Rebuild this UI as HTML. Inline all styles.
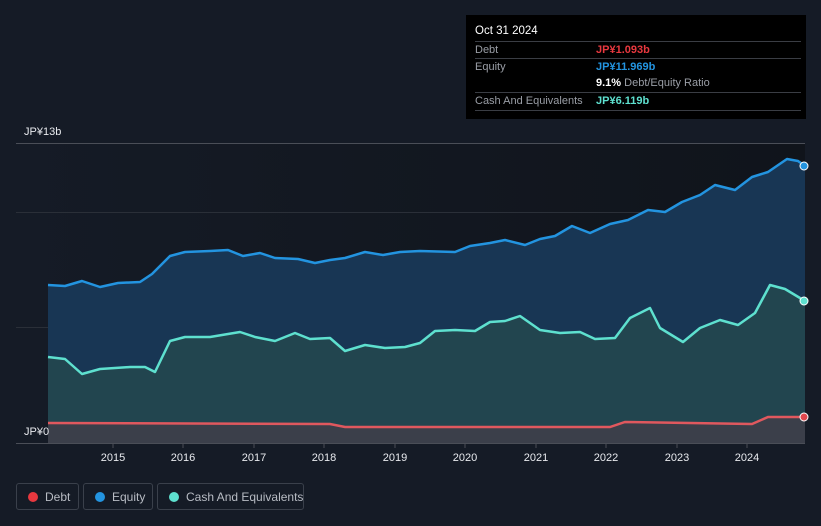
<!DOCTYPE html><html><head><style>
body{margin:0;width:821px;height:526px;background:#151b26;font-family:"Liberation Sans",sans-serif;overflow:hidden;position:relative}
.tt{position:absolute;left:466px;top:15px;width:340px;height:104px;background:#000;font-size:11px;color:#9a9ea6}
.tt .h{position:absolute;left:9px;top:10px;color:#fff;font-size:11.5px}
.r{position:absolute;left:9px;width:326px;border-top:1px solid #3a3d44;height:17px;line-height:17px}
.r span{position:absolute;left:121px;font-weight:bold}
.leg{position:absolute;top:483px;height:27px;border:1px solid #3a404b;border-radius:3px;color:#b8bcc4;font-size:12px;line-height:26px;box-sizing:border-box;white-space:nowrap}
.leg i{position:absolute;left:11px;top:8px;width:10px;height:10px;border-radius:50%}
.leg b{font-weight:normal;position:absolute;left:28px}
</style></head><body>
<svg width="821" height="526" style="position:absolute;left:0;top:0">
<defs><linearGradient id="bg" x1="0" x2="1"><stop offset="0" stop-color="#151b26"/><stop offset="1" stop-color="#10141b"/></linearGradient></defs>
<rect x="16" y="143" width="789" height="300" fill="url(#bg)"/>
<line x1="16" y1="143.5" x2="805" y2="143.5" stroke="#4a4e57"/>
<line x1="16" y1="212.5" x2="805" y2="212.5" stroke="#2a2f38"/>
<line x1="16" y1="327.5" x2="805" y2="327.5" stroke="#2a2f38"/>
<path d="M48 285L65 286 82 281 100 287 118 283 140 282 152 274 170 256 185 252 210 251 228 250 243 256 260 253 275 258 298 259 315 263 330 260 345 258 365 252 383 255 400 252 420 251 455 252 470 246 490 243 505 240 525 245 540 239 555 236 572 226 590 233 610 224 628 220 648 210 665 212 682 202 700 195 715 185 735 190 752 177 768 172 787 159 798 161 805 166L805 443 48 443Z" fill="#183654"/>
<path d="M48 357L65 359 82 374 100 369 130 367 145 367 155 372 170 341 185 337 210 337 240 332 255 337 275 341 295 333 310 339 330 338 345 351 365 345 385 348 405 347 420 343 435 331 455 330 475 331 490 322 505 321 520 316 540 330 560 333 580 332 595 339 615 338 630 318 650 308 660 328 683 342 700 328 720 320 738 325 755 313 770 285 785 289 805 301L805 443 48 443Z" fill="#22454f"/>
<path d="M48 423L330 424 345 427 610 427 625 422 752 424 768 417 805 417L805 443 48 443Z" fill="#3b3f4a"/>
<path d="M48 285L65 286 82 281 100 287 118 283 140 282 152 274 170 256 185 252 210 251 228 250 243 256 260 253 275 258 298 259 315 263 330 260 345 258 365 252 383 255 400 252 420 251 455 252 470 246 490 243 505 240 525 245 540 239 555 236 572 226 590 233 610 224 628 220 648 210 665 212 682 202 700 195 715 185 735 190 752 177 768 172 787 159 798 161 805 166" fill="none" stroke="#2394e0" stroke-width="2.5" stroke-linejoin="round"/>
<path d="M48 357L65 359 82 374 100 369 130 367 145 367 155 372 170 341 185 337 210 337 240 332 255 337 275 341 295 333 310 339 330 338 345 351 365 345 385 348 405 347 420 343 435 331 455 330 475 331 490 322 505 321 520 316 540 330 560 333 580 332 595 339 615 338 630 318 650 308 660 328 683 342 700 328 720 320 738 325 755 313 770 285 785 289 805 301" fill="none" stroke="#5ee0cf" stroke-width="2.5" stroke-linejoin="round"/>
<path d="M48 423L330 424 345 427 610 427 625 422 752 424 768 417 805 417" fill="none" stroke="#e0585e" stroke-width="2.5"/>
<circle cx="804" cy="166" r="4" fill="#2394e0" stroke="#fff"/>
<circle cx="804" cy="301" r="4" fill="#5ee0cf" stroke="#fff"/>
<circle cx="804" cy="417" r="4" fill="#e0484e" stroke="#fff"/>
<line x1="16" y1="443.5" x2="805" y2="443.5" stroke="#4a4e57"/>
<g stroke="#4a4e57"><line x1="113" y1="443" x2="113" y2="448"/><line x1="183" y1="443" x2="183" y2="448"/><line x1="254" y1="443" x2="254" y2="448"/><line x1="324" y1="443" x2="324" y2="448"/><line x1="395" y1="443" x2="395" y2="448"/><line x1="465" y1="443" x2="465" y2="448"/><line x1="536" y1="443" x2="536" y2="448"/><line x1="606" y1="443" x2="606" y2="448"/><line x1="677" y1="443" x2="677" y2="448"/><line x1="747" y1="443" x2="747" y2="448"/></g>
<g fill="#e8eaee" font-size="11" text-anchor="middle"><text x="113" y="461">2015</text><text x="183" y="461">2016</text><text x="254" y="461">2017</text><text x="324" y="461">2018</text><text x="395" y="461">2019</text><text x="465" y="461">2020</text><text x="536" y="461">2021</text><text x="606" y="461">2022</text><text x="677" y="461">2023</text><text x="747" y="461">2024</text></g>
<text x="24" y="135" fill="#e8eaee" font-size="11">JP¥13b</text>
<text x="24" y="435" fill="#e8eaee" font-size="11">JP¥0</text>
</svg>
<div class="tt"><div class="h">Oct 31 2024</div>
<div class="r" style="top:26px">Debt<span style="color:#e8383f">JP¥1.093b</span></div>
<div class="r" style="top:43px">Equity<span style="color:#2394e0">JP¥11.969b</span></div>
<div class="r" style="top:60px;border-top:none"><span style="color:#fff">9.1% <b style="color:#9a9ea6;font-weight:normal">Debt/Equity Ratio</b></span></div>
<div class="r" style="top:77px">Cash And Equivalents<span style="color:#5ee0cf">JP¥6.119b</span></div>
<div class="r" style="top:95px;height:0"></div>
</div>
<div class="leg" style="left:16px;width:63px"><i style="background:#e8383f"></i><b>Debt</b></div>
<div class="leg" style="left:83px;width:70px"><i style="background:#2394e0"></i><b>Equity</b></div>
<div class="leg" style="left:157px;width:147px"><i style="background:#5ee0cf"></i><b>Cash And Equivalents</b></div>
</body></html>
